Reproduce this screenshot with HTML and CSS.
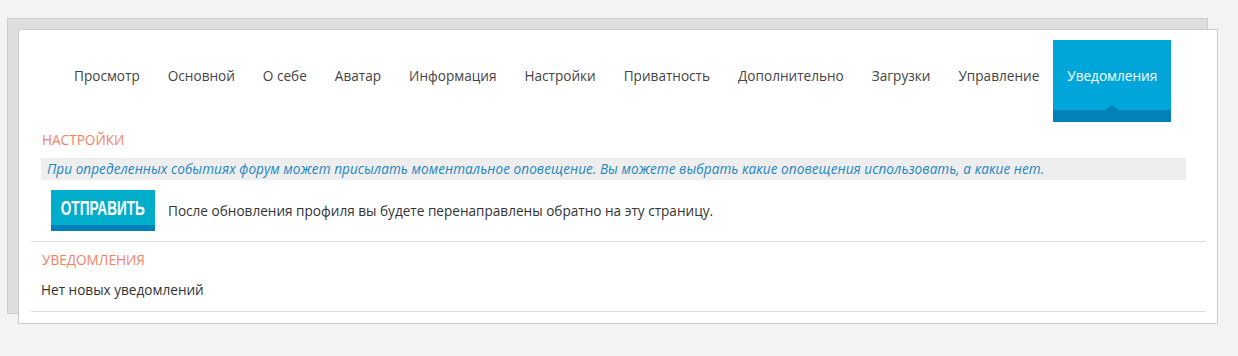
FILE: index.html
```html
<!DOCTYPE html>
<html lang="ru">
<head>
<meta charset="utf-8">
<title>Уведомления</title>
<link rel="stylesheet" href="styles.css">
</head>
<body>
<div class="frame">
  <div class="panel">
    <nav class="tabs">
      <a class="tab">Просмотр</a>
      <a class="tab">Основной</a>
      <a class="tab">О себе</a>
      <a class="tab">Аватар</a>
      <a class="tab">Информация</a>
      <a class="tab">Настройки</a>
      <a class="tab">Приватность</a>
      <a class="tab">Дополнительно</a>
      <a class="tab">Загрузки</a>
      <a class="tab">Управление</a>
      <a class="tab active">Уведомления</a>
    </nav>
    <section class="section">
      <h3 class="heading">Настройки</h3>
      <div class="info">При определенных событиях форум может присылать моментальное оповещение. Вы можете выбрать какие оповещения использовать, а какие нет.</div>
      <div class="submit-row">
        <button class="btn"><span class="btn-label">Отправить</span></button>
        <span class="note">После обновления профиля вы будете перенаправлены обратно на эту страницу.</span>
      </div>
    </section>
    <section class="section">
      <h3 class="heading">Уведомления</h3>
      <p class="empty">Нет новых уведомлений</p>
    </section>
  </div>
</div>
</body>
</html>
```
FILE: styles.css
```css
html, body {
  margin: 0;
  padding: 0;
  background: #f3f3f3;
}
body {
  font-family: "Open Sans", "Noto Sans", sans-serif;
  font-size: 13.6px;
  color: #333;
}
.frame {
  position: relative;
  margin: 29px 0 0 18px;
  width: 1200px;
}
.frame::before {
  content: "";
  position: absolute;
  top: -11px;
  left: -11px;
  width: 1199px;
  height: 294px;
  background: #dedede;
  border: 1px solid #cccccc;
  z-index: 0;
}
.panel {
  position: relative;
  z-index: 1;
  background: #fff;
  border: 1px solid #cccccc;
  height: 293px;
}
.tabs {
  display: flex;
  margin-top: 10px;
  padding-left: 41px;
  height: 82px;
}
.tab {
  display: flex;
  align-items: center;
  padding: 0 14px 12px;
  color: #444;
  font-size: 13.6px;
  white-space: nowrap;
  position: relative;
}
.tab.active {
  background: #00a6d9;
  color: #fff;
}
.tab.active::after {
  content: "";
  position: absolute;
  left: 0;
  right: 0;
  bottom: 0;
  height: 12px;
  background: #0081b8;
}
.tab.active::before {
  content: "";
  position: absolute;
  left: 50%;
  bottom: 12px;
  margin-left: -6px;
  border-left: 6px solid transparent;
  border-right: 6px solid transparent;
  border-bottom: 5px solid #0081b8;
}
.section {
  margin: 0 11px 0 12px;
  border-bottom: 1px solid #dddddd;
}
.heading {
  margin: 8px 0 0;
  padding-left: 11px;
  line-height: 20px;
  font-size: 13.6px;
  font-weight: normal;
  text-transform: uppercase;
  color: #f7805f;
}
.info {
  margin: 8px 20px 0 10px;
  height: 22px;
  line-height: 22px;
  padding-left: 6px;
  background: #eeeeee;
  color: #1d87c2;
  font-style: italic;
  letter-spacing: 0.05px;
  white-space: nowrap;
}
.submit-row {
  display: flex;
  align-items: center;
  gap: 13px;
  margin: 10px 0 10px 20px;
}
.btn {
  display: flex;
  align-items: center;
  justify-content: center;
  width: 104px;
  height: 41px;
  border: 0;
  padding: 0 0 6px;
  background: #00aecb;
  box-shadow: inset 0 -6px 0 #0080b8;
  cursor: pointer;
}
.btn-label {
  display: inline-block;
  color: #fff;
  font-family: "Liberation Sans", sans-serif;
  font-weight: bold;
  font-size: 20px;
  line-height: 20px;
  text-transform: uppercase;
  transform: scaleX(0.68);
  white-space: nowrap;
}
.note {
  color: #333;
}
.empty {
  margin: 10px 0 0;
  padding-left: 10px;
  line-height: 20px;
  padding-bottom: 11px;
  color: #333;
}
```
